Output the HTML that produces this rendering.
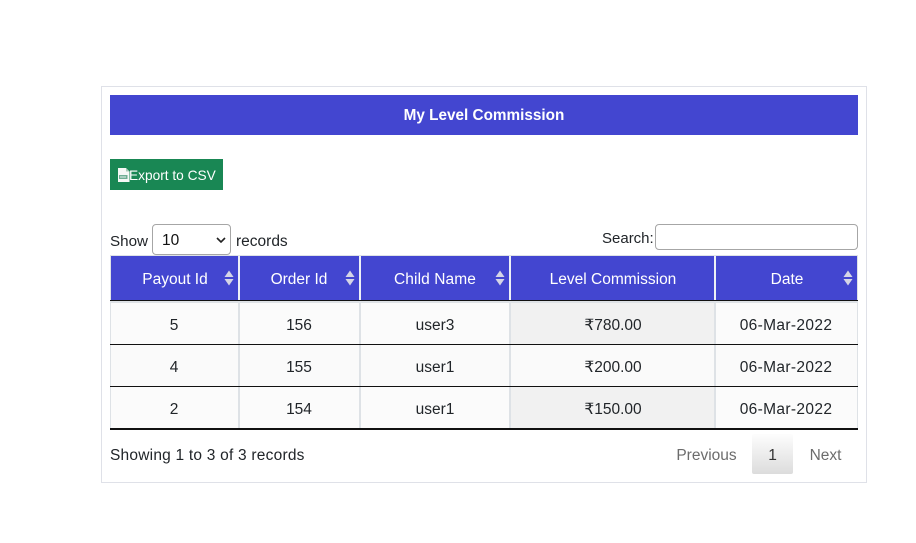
<!DOCTYPE html>
<html>
<head>
<meta charset="utf-8">
<style>
html,body{margin:0;padding:0;background:#fff;width:916px;height:543px;overflow:hidden}
body{position:relative;font-family:"Liberation Sans",sans-serif;font-size:15.5px;color:#212529}
.a{position:absolute;box-sizing:border-box}
.t{position:absolute;white-space:nowrap;line-height:20px;text-align:center;transform:translateX(-50%)}
.l{position:absolute;white-space:nowrap;line-height:20px}
.w{color:#fff}
</style>
</head>
<body>
<div class="a" style="left:101px;top:86px;width:766px;height:397px;border:1px solid #dfe1e8"></div>
<div class="a" style="left:110px;top:95px;width:748px;height:40px;background:#4346d0"></div>
<div class="t w" style="left:484px;top:106px;font-weight:bold;font-size:15.3px">My Level Commission</div>

<div class="a" style="left:110px;top:159px;width:113px;height:31px;background:#198754"></div>
<svg class="a" style="left:118px;top:168px" width="12" height="14" viewBox="0 0 12 14"><path d="M0 0h8l3.5 3.5V14H0z" fill="#f6f8f6"/><path d="M8 0v3.5h3.5" fill="#a9cbb9"/><rect x="1" y="7" width="8.500" height="4" fill="#6fae94"/><rect x="2" y="8.500" width="6" height="1" fill="#e6f0ec"/></svg>
<div class="l w" style="left:129px;top:166px;font-size:13.7px">Export to CSV</div>

<div class="l" style="left:110px;top:232px;font-size:15.2px">Show</div>
<div class="a" style="left:152px;top:224px;width:79px;height:31px;border:1px solid #a6a6a6;border-radius:4px;background:#fff"></div>
<div class="l" style="left:162px;top:231px;color:#111">10</div>
<svg class="a" style="left:216px;top:237px" width="10" height="6" viewBox="0 0 10 6"><path d="M1 1l4 4 4-4" fill="none" stroke="#222" stroke-width="1.6"/></svg>
<div class="l" style="left:236px;top:232px">records</div>
<div class="l" style="left:602px;top:229px;font-size:15px">Search:</div>
<div class="a" style="left:655px;top:224px;width:203px;height:26px;border:1px solid #a6a6a6;border-radius:4px;background:#fff"></div>

<!-- table backgrounds -->
<div class="a" style="left:110px;top:255px;width:748px;height:175px;background:#dee2e6"></div>
<div class="a" style="left:111px;top:256px;width:746px;height:44px;background:#4346d0"></div>
<div class="a" style="left:110px;top:300px;width:748px;height:1px;background:#111"></div>

<!-- header separators -->
<div class="a" style="left:238px;top:256px;width:2px;height:44px;background:#eef0f6"></div>
<div class="a" style="left:359px;top:256px;width:2px;height:44px;background:#eef0f6"></div>
<div class="a" style="left:509px;top:256px;width:2px;height:44px;background:#eef0f6"></div>
<div class="a" style="left:714px;top:256px;width:2px;height:44px;background:#eef0f6"></div>

<!-- row cells -->
<div class="a" style="left:111px;top:303px;width:127px;height:41px;background:#fbfbfb"></div>
<div class="a" style="left:240px;top:303px;width:119px;height:41px;background:#fbfbfb"></div>
<div class="a" style="left:361px;top:303px;width:148px;height:41px;background:#fbfbfb"></div>
<div class="a" style="left:511px;top:303px;width:203px;height:41px;background:#f1f1f1"></div>
<div class="a" style="left:716px;top:303px;width:141px;height:41px;background:#fbfbfb"></div>
<div class="a" style="left:110px;top:344px;width:748px;height:1px;background:#111"></div>

<div class="a" style="left:111px;top:345px;width:127px;height:41px;background:#fafafa"></div>
<div class="a" style="left:240px;top:345px;width:119px;height:41px;background:#fafafa"></div>
<div class="a" style="left:361px;top:345px;width:148px;height:41px;background:#fafafa"></div>
<div class="a" style="left:511px;top:345px;width:203px;height:41px;background:#fafafa"></div>
<div class="a" style="left:716px;top:345px;width:141px;height:41px;background:#fafafa"></div>
<div class="a" style="left:110px;top:386px;width:748px;height:1px;background:#111"></div>

<div class="a" style="left:111px;top:387px;width:127px;height:41px;background:#fbfbfb"></div>
<div class="a" style="left:240px;top:387px;width:119px;height:41px;background:#fbfbfb"></div>
<div class="a" style="left:361px;top:387px;width:148px;height:41px;background:#fbfbfb"></div>
<div class="a" style="left:511px;top:387px;width:203px;height:41px;background:#f1f1f1"></div>
<div class="a" style="left:716px;top:387px;width:141px;height:41px;background:#fbfbfb"></div>
<div class="a" style="left:110px;top:428px;width:748px;height:2px;background:#111"></div>

<!-- headers -->
<div class="t w" style="left:175px;top:270px">Payout Id</div>
<div class="t w" style="left:299px;top:270px">Order Id</div>
<div class="t w" style="left:435px;top:270px;letter-spacing:.1px">Child Name</div>
<div class="t w" style="left:613px;top:270px">Level Commission</div>
<div class="t w" style="left:787px;top:270px">Date</div>

<svg class="a" style="left:224px;top:270px" width="10" height="16" viewBox="0 0 10 16"><path d="M5 0.500L9.500 7H0.500z" fill="#d5d5e6"/><path d="M5 15.500L9.500 9H0.500z" fill="#d5d5e6"/></svg>
<svg class="a" style="left:345px;top:270px" width="10" height="16" viewBox="0 0 10 16"><path d="M5 0.500L9.500 7H0.500z" fill="#d5d5e6"/><path d="M5 15.500L9.500 9H0.500z" fill="#d5d5e6"/></svg>
<svg class="a" style="left:495px;top:270px" width="10" height="16" viewBox="0 0 10 16"><path d="M5 0.500L9.500 7H0.500z" fill="#d5d5e6"/><path d="M5 15.500L9.500 9H0.500z" fill="#d5d5e6"/></svg>
<svg class="a" style="left:843px;top:270px" width="10" height="16" viewBox="0 0 10 16"><path d="M5 0.500L9.500 7H0.500z" fill="#d5d5e6"/><path d="M5 15.500L9.500 9H0.500z" fill="#d5d5e6"/></svg>

<!-- rows -->
<div class="t" style="left:174px;top:316px">5</div>
<div class="t" style="left:299px;top:316px">156</div>
<div class="t" style="left:435px;top:316px">user3</div>
<div class="t" style="left:613px;top:316px">₹780.00</div>
<div class="t" style="left:786px;top:316px;letter-spacing:.35px">06-Mar-2022</div>

<div class="t" style="left:174px;top:358px">4</div>
<div class="t" style="left:299px;top:358px">155</div>
<div class="t" style="left:435px;top:358px">user1</div>
<div class="t" style="left:613px;top:358px">₹200.00</div>
<div class="t" style="left:786px;top:358px;letter-spacing:.35px">06-Mar-2022</div>

<div class="t" style="left:174px;top:400px">2</div>
<div class="t" style="left:299px;top:400px">154</div>
<div class="t" style="left:435px;top:400px">user1</div>
<div class="t" style="left:613px;top:400px">₹150.00</div>
<div class="t" style="left:786px;top:400px;letter-spacing:.35px">06-Mar-2022</div>

<!-- footer -->
<div class="l" style="left:110px;top:446px;letter-spacing:.22px">Showing 1 to 3 of 3 records</div>
<div class="t" style="left:706.500px;top:446px;color:#6c6c6c">Previous</div>
<div class="a" style="left:752px;top:434px;width:41px;height:40px;border-radius:2px;background:linear-gradient(to bottom,#fdfdfd 0%,#dcdcdc 100%)"></div>
<div class="t" style="left:772.500px;top:446px;color:#333">1</div>
<div class="t" style="left:825.500px;top:446px;color:#6c6c6c">Next</div>
</body>
</html>
